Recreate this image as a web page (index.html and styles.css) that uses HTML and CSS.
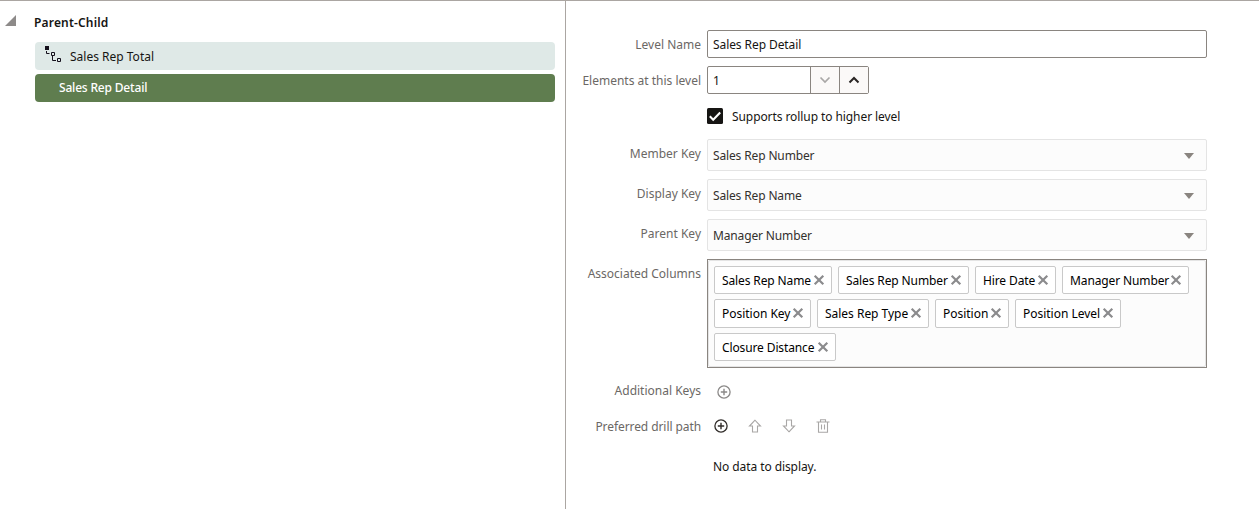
FILE: index.html
```html
<!DOCTYPE html>
<html lang="en">
<head>
<meta charset="utf-8">
<title>Parent-Child Hierarchy</title>
<link rel="stylesheet" href="styles.css">
</head>
<body>
<svg class="defs" width="0" height="0">
  <symbol id="x" viewBox="0 0 12 12"><path d="M1.7 1.7 10.3 10.3M10.3 1.7 1.7 10.3" fill="none" stroke="#8b8b8d" stroke-width="2.2"/></symbol>
  <symbol id="plus" viewBox="0 0 14 14"><circle cx="7" cy="7" r="6.1" fill="none" stroke="currentColor" stroke-width="1.3"/><path d="M7 3.8v6.4M3.8 7h6.4" stroke="currentColor" stroke-width="1.4"/></symbol>
  <symbol id="arrow" viewBox="0 0 14 14"><path d="M7 1.2 1.5 7H4.5V13H9.5V7H12.5Z" fill="none" stroke="currentColor" stroke-width="1.1"/></symbol>
</svg>
<div class="app">
  <aside class="tree">
    <div class="tree-head">
      <svg class="expander" width="11" height="11" viewBox="0 0 11 11"><path d="M11 0V11H0Z" fill="#8d8a89"/></svg>
      <span class="t title">Parent-Child</span>
    </div>
    <div class="level">
      <svg class="level-icon" width="18" height="18" viewBox="0 0 18 18"><path d="M0 1h4v4H0z" fill="#15101c"/><path d="M1.5 6v2.500h3M7.500 11v4.500h3.500" fill="none" stroke="#15101c"/><path d="M6.500 7.500h3v3h-3zM12.500 13.500h3v3h-3z" fill="none" stroke="#15101c"/></svg>
      <span class="t total">Sales Rep Total</span>
    </div>
    <div class="level selected"><span class="t">Sales Rep Detail</span></div>
  </aside>
  <main class="form">
    <div class="row row-name"><label class="t">Level Name</label><div class="input"><span class="t tight">Sales Rep Detail</span></div></div>
    <div class="row row-elements"><label class="t">Elements at this level</label>
      <div class="spinner"><div class="number"><span class="t">1</span></div>
        <div class="step"><svg width="12" height="8" viewBox="0 0 12 8"><path d="M1.5 1.5 6 6l4.500-4.500" fill="none" stroke="#a9a7a6" stroke-width="1.700"/></svg></div>
        <div class="step"><svg width="12" height="8" viewBox="0 0 12 8"><path d="M1.500 6.500 6 2l4.500 4.500" fill="none" stroke="#292524" stroke-width="2"/></svg></div>
      </div></div>
    <div class="row row-check"><span></span><div class="check"><svg width="16" height="16" viewBox="0 0 16 16"><rect width="16" height="16" rx="1.500" fill="#161513"/><path d="M2.800 8.300 6.200 11.700 13.200 4.500" fill="none" stroke="#fff" stroke-width="2.100"/></svg><span class="t tight">Supports rollup to higher level</span></div></div>
    <div class="row row-select"><label class="t">Member Key</label><div class="select"><span class="t">Sales Rep Number</span><i class="caret"></i></div></div>
    <div class="row row-select"><label class="t">Display Key</label><div class="select"><span class="t">Sales Rep Name</span><i class="caret"></i></div></div>
    <div class="row row-select"><label class="t">Parent Key</label><div class="select"><span class="t">Manager Number</span><i class="caret"></i></div></div>
    <div class="row row-columns"><label class="t">Associated Columns</label>
      <div class="columns"><div class="chips">
        <div class="chip-row">
          <div class="chip c-repname"><span class="t">Sales Rep Name</span><svg><use href="#x"/></svg></div>
          <div class="chip c-number"><span class="t">Sales Rep Number</span><svg><use href="#x"/></svg></div>
          <div class="chip c-hire"><span class="t">Hire Date</span><svg><use href="#x"/></svg></div>
          <div class="chip c-manager"><span class="t">Manager Number</span><svg><use href="#x"/></svg></div>
        </div>
        <div class="chip-row tall">
          <div class="chip c-poskey"><span class="t">Position Key</span><svg><use href="#x"/></svg></div>
          <div class="chip c-type"><span class="t">Sales Rep Type</span><svg><use href="#x"/></svg></div>
          <div class="chip c-position"><span class="t">Position</span><svg><use href="#x"/></svg></div>
          <div class="chip c-level"><span class="t">Position Level</span><svg><use href="#x"/></svg></div>
        </div>
        <div class="chip-row">
          <div class="chip c-closure"><span class="t">Closure Distance</span><svg><use href="#x"/></svg></div>
        </div>
      </div></div></div>
    <div class="row row-keys"><label class="t">Additional Keys</label><div class="tools keys"><svg class="muted"><use href="#plus"/></svg></div></div>
    <div class="row row-drill"><label class="t tight">Preferred drill path</label><div class="tools drill">
      <svg class="active"><use href="#plus"/></svg>
      <svg class="off"><use href="#arrow"/></svg>
      <svg class="off down"><use href="#arrow"/></svg>
      <svg class="off" viewBox="0 0 14 14"><path d="M.5 3h13M4.500 3V.7h5V3M2.500 3V13.300h9V3M5.500 5.500v5M8.500 5.500v5" fill="none" stroke="currentColor" stroke-width="1.100"/></svg>
    </div></div>
    <div class="row row-empty"><span></span><span class="t empty tight">No data to display.</span></div>
  </main>
</div>
</body>
</html>
```
FILE: styles.css
```css
* { box-sizing: border-box; }
body { margin: 0; background: #fff; color: #161513; font: 12px/16px "Noto Sans", sans-serif; overflow: hidden; }
.defs { position: absolute; }
.t { white-space: nowrap; }
.tight { letter-spacing: -.08px; }
.app { display: flex; height: 509px; border-top: 1px solid #aba6a2; }
svg { display: block; flex: none; }

.tree { width: 566px; flex: none; border-right: 1px solid #aba6a2; padding: 13px 10px 0 5px; }
.tree-head { display: flex; height: 16px; gap: 18px; }
.expander { margin-top: 1px; }
.title { padding-top: 1px; font-weight: 600; letter-spacing: .18px; }
.level { display: flex; height: 28px; margin: 12px 0 0 30px; padding: 6px 10px; border-radius: 4px; background: #dfe9e7; }
.level-icon { margin-top: -3px; margin-right: 7px; }
.total { padding-top: 1px; }
.selected { margin-top: 4px; padding-left: 24px; background: #5f7d4f; color: #fff; font-weight: 500; letter-spacing: -.18px; }

.form { flex: 1; padding-top: 29px; }
.row { display: grid; grid-template-columns: 135px 500px; column-gap: 6px; }
label { justify-self: end; color: #6b6865; }
.row-name { height: 36px; }
.row-name label, .row-elements label { padding-top: 7px; }
.input { height: 28px; padding: 6px 5px; border: 1px solid #8a8580; border-radius: 2px; }
.row-elements { height: 42px; }
.spinner { display: flex; width: 162px; height: 28px; border: 1px solid #8a8580; border-radius: 2px; }
.number { flex: 1; padding: 6px 5px; }
.step { display: grid; width: 29px; place-items: center; border-left: 1px solid #8a8580; background: #fbf9f8; }
.row-check { height: 31px; }
.check { display: flex; gap: 9px; }
.check .t { padding-top: 1px; }
.row-select { height: 40px; }
.row-select label { padding-top: 7px; }
.select { display: flex; justify-content: space-between; align-items: center; height: 32px; padding: 2px 12px 0 5px; border: 1px solid #e4e4e4; border-radius: 2px; background: #fcfcfc; color: #33302d; letter-spacing: -.14px; }
.caret { width: 0; height: 0; border: 5px solid transparent; border-top: 6px solid #8a8580; border-bottom: 0; }
.row-columns { height: 123px; }
.row-columns label { padding-top: 7px; }
.columns { height: 109px; border: 1px solid #8a8580; }
.chips { display: flex; flex-direction: column; gap: 5px; height: 107px; padding: 5px; border: 1px solid #e4e4e4; border-radius: 2px; background: #fcfcfc; }
.chip-row { display: flex; gap: 6px; height: 28px; }
.chip { display: flex; justify-content: space-between; padding: 6px 6px 0 7px; border: 1px solid #c9c9c9; border-radius: 2px; background: #fff; color: #000; letter-spacing: -.12px; }
.chip svg { width: 12px; height: 12px; margin-top: 1px; }
.tall { height: 29px; letter-spacing: 0; }
.tall .chip { letter-spacing: -.02px; }
.c-repname { width: 118px; }
.c-number { width: 131px; }
.c-hire { width: 81px; }
.c-manager { width: 127px; }
.c-poskey { width: 97px; }
.c-type { width: 112px; }
.c-position { width: 74px; }
.c-level { width: 106px; }
.c-closure { width: 122px; }
.row-keys { height: 36px; }
.row-keys label, .row-drill label { padding-top: 1px; }
.tools { display: flex; gap: 20px; height: 16px; padding: 3px 0 0 7px; }
.keys { padding-left: 10px; }
.drill { padding-top: 1px; }
.tools svg { width: 14px; height: 14px; }
.muted { color: #8b8988; }
.active { color: #312d2a; }
.off { color: #a9a7a6; }
.down { transform: rotate(180deg); }
.row-empty { padding-top: 24px; }
.empty { padding-left: 6px; }
```
